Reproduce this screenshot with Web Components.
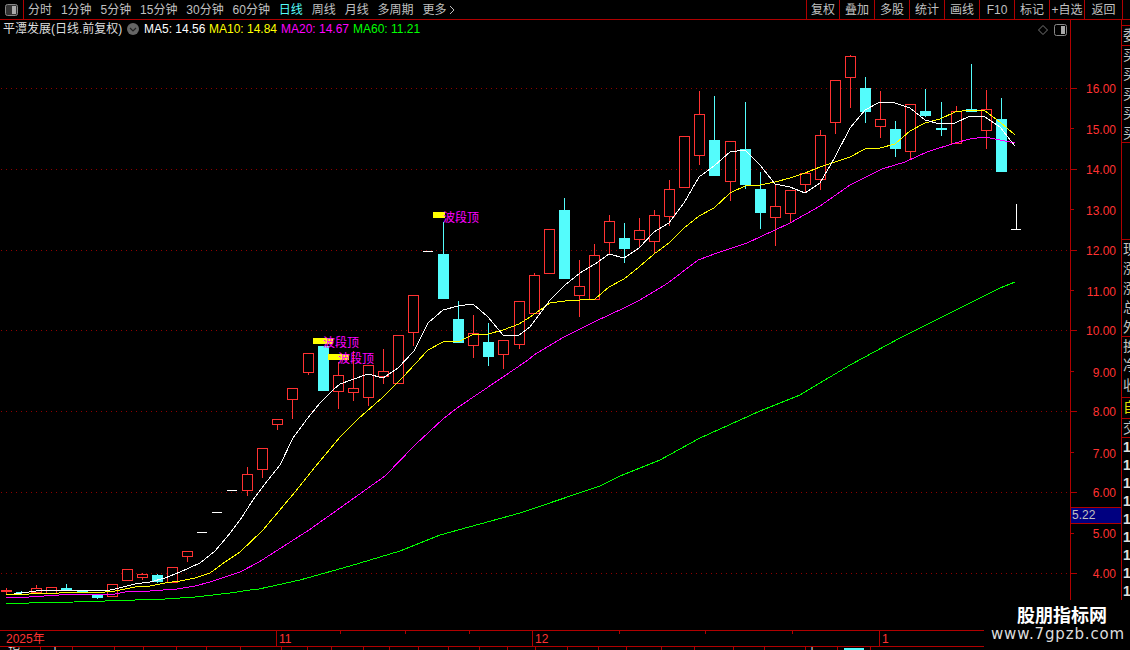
<!DOCTYPE html>
<html lang="zh"><head><meta charset="utf-8"><title>平潭发展</title>
<style>
html,body{margin:0;padding:0;background:#000;overflow:hidden}
body{font-family:"Liberation Sans","Noto Sans CJK SC",sans-serif;font-size:12px}
</style></head>
<body>
<stock-app></stock-app>
<script>
const FONT='"Liberation Sans","Noto Sans CJK SC",sans-serif';
const LINE='#b00000';
const panelIcon=(fillLeft)=>`<svg width="13" height="12" viewBox="0 0 13 12" style="display:block"><rect x="0.5" y="0.5" width="12" height="11" rx="2" fill="${fillLeft?'#333':'#000'}" stroke="#888"/><rect x="7" y="2" width="4" height="8" fill="#aaa"/></svg>`;

class ToolBar extends HTMLElement{
  constructor(){super();const s=this.attachShadow({mode:'open'});
    const left=[['分时'],['1分钟'],['5分钟'],['15分钟'],['30分钟'],['60分钟'],['日线',1],['周线'],['月线'],['多周期']];
    const right=[['复权',33],['叠加',35],['多股',35],['统计',35],['画线',35],['F10',35],['标记',35],['+自选',35],['返回',38]];
    s.innerHTML=`<style>
    :host{display:flex;height:19px;border-bottom:1px solid ${LINE};color:#c0c0c0;font:12px/20px ${FONT};white-space:nowrap}
    .ico{width:23px;border-right:1px solid ${LINE};display:flex;align-items:center;justify-content:center;box-sizing:content-box}
    .l{display:flex;gap:8.9px;padding-left:4px;flex:1}
    .on{color:#54fcfc}
    .more{display:flex;align-items:center;gap:3px}
    .r{display:flex;border-right:1px solid ${LINE};height:19px;margin-right:7px}
    .r span{border-left:1px solid ${LINE};text-align:center;box-sizing:border-box}
    </style>
    <div class="ico">${panelIcon(true)}</div>
    <div class="l">${left.map(([t,on])=>`<span class="${on?'on':''}">${t}</span>`).join('')}
      <span class="more">更多<svg width="6" height="10" viewBox="0 0 6 10"><path d="M1 1l4 4-4 4" fill="none" stroke="#c0c0c0"/></svg></span></div>
    <div class="r">${right.map(([t,w])=>`<span style="width:${w}px">${t}</span>`).join('')}</div>`;
  }
}
customElements.define('tool-bar',ToolBar);

class ChartLegend extends HTMLElement{
  constructor(){super();const s=this.attachShadow({mode:'open'});
    s.innerHTML=`<style>
    :host{position:absolute;left:3px;top:0;right:0;height:18px;display:flex;align-items:center;font:12px/18px ${FONT};white-space:nowrap;color:#ddd}
    .t{width:124px}
    .b{width:12px;height:12px;margin-right:5px;flex:none}
    .m{display:inline-block}
    .c{position:absolute;left:1035px;top:4px;display:flex;gap:6px;align-items:center}
    </style>
    <span class="t">平潭发展(日线.前复权)</span>
    <svg class="b" viewBox="0 0 12 12"><circle cx="6" cy="6" r="6" fill="#666"/><path d="M3 5l3 3 3-3" fill="none" stroke="#222" stroke-width="1.2"/></svg>
    <span class="m" style="color:#fff;width:65px">MA5: 14.56</span>
    <span class="m" style="color:#ff0;width:72px">MA10: 14.84</span>
    <span class="m" style="color:#f0f;width:72px">MA20: 14.67</span>
    <span class="m" style="color:#0f0">MA60: 11.21</span>
    <div class="c"><svg width="10" height="10" viewBox="0 0 10 10"><path d="M5 .5L9.5 5 5 9.5.5 5z" fill="none" stroke="#777"/></svg>${panelIcon(false)}</div>`;
  }
}
customElements.define('chart-legend',ChartLegend);

/* [left, bodyTop, bodyBottom, wickTop, wickBottom, kind]  r = red hollow, c = cyan filled */
const CANDLES=[
[1,590,592,588,594,'f'],[16,592,593,591,595,'c'],[31,588,592,585,593,'r'],[46,587,593,587,593,'r'],[61,588,591,584,591,'c'],
[77,590,592,590,592,'c'],[92,594,598,594,599,'c'],[107,584,596,584,596,'r'],[122,569,580,569,580,'r'],[137,574,577,573,580,'r'],
[152,575,582,574,583,'c'],[167,567,582,567,582,'r'],[182,551,556,551,562,'r'],
[257,448,469,448,478,'r'],[242,474,490,467,496,'r'],[272,419,424,419,430,'r'],[287,388,399,388,419,'r'],[303,353,372,353,375,'r'],
[318,346,391,346,391,'c'],[333,375,391,362,409,'r'],[348,388,392,351,401,'r'],[363,365,397,365,406,'r'],[378,371,376,349,384,'r'],
[393,335,383,335,383,'r'],[408,295,332,295,346,'r'],[438,254,299,222,299,'c'],[453,319,343,301,343,'c'],[468,333,345,315,358,'r'],
[483,342,357,323,366,'c'],[498,340,354,340,369,'r'],[514,301,344,301,349,'r'],[529,275,313,273,313,'r'],[544,229,273,229,273,'r'],
[559,210,279,198,279,'c'],[574,286,295,260,317,'r'],[589,255,299,244,299,'r'],[604,221,242,215,255,'r'],[619,238,249,223,263,'c'],
[634,230,239,218,248,'r'],[649,215,241,210,254,'r'],[664,189,216,180,226,'r'],[679,136,187,136,187,'r'],[694,114,155,91,165,'r'],
[709,140,176,96,176,'c'],[725,141,181,141,201,'r'],[740,149,185,102,189,'c'],[755,189,213,172,229,'c'],[770,206,217,185,246,'r'],
[785,190,213,190,223,'r'],[800,173,184,173,193,'r'],[815,135,179,130,190,'r'],[830,80,122,80,134,'r'],[845,56,77,55,108,'r'],
[860,88,112,77,123,'c'],[875,119,126,91,138,'r'],[890,129,149,121,157,'c'],[905,104,151,104,159,'r'],[920,111,116,89,117,'c'],
[936,128,130,102,136,'c'],[951,111,143,106,143,'r'],[966,109,112,64,112,'c'],[981,109,130,90,149,'r'],[996,119,172,98,172,'c']];
const DASHES=[[197,532],[212,512],[227,490],[423,251]];
const MA5=[[14,594],[29,592],[44,590],[90,590],[105,591],[115,589],[135,584],[150,582],[165,578],[180,572],[200,563],[215,551],[227,537],[240,520],[253,500],[268,480],[280,465],[293,438],[307,419],[320,403],[333,390],[340,384],[368,374],[383,378],[398,368],[414,351],[428,323],[443,310],[458,306],[473,304],[488,317],[503,335],[519,335],[530,327],[550,300],[565,285],[580,273],[595,264],[609,254],[624,258],[639,248],[654,232],[669,223],[684,203],[699,177],[714,166],[730,152],[745,150],[760,165],[775,184],[790,187],[805,193],[820,183],[835,157],[850,128],[865,110],[880,102],[895,103],[910,108],[925,120],[940,124],[955,123],[970,116],[985,117],[1000,127],[1015,146]];
const MA10=[[6,595],[29,594],[59,593],[74,592],[105,592],[115,591],[125,589],[135,587],[150,586],[165,583],[180,581],[195,578],[210,573],[225,562],[240,552],[263,530],[295,492],[315,467],[340,437],[358,419],[383,397],[403,377],[428,350],[443,342],[460,341],[472,335],[488,334],[503,330],[519,324],[530,317],[550,303],[565,301],[580,300],[595,299],[609,287],[624,279],[639,267],[654,254],[669,243],[684,228],[699,216],[714,208],[730,193],[745,186],[760,185],[775,182],[790,178],[805,173],[820,167],[835,162],[850,157],[865,149],[880,148],[895,144],[910,131],[925,123],[940,119],[955,112],[970,110],[985,111],[1000,122],[1015,135]];
const MA20=[[6,597],[29,597],[59,595],[74,594],[115,594],[125,592],[150,591],[177,589],[195,586],[210,582],[225,577],[240,572],[259,562],[309,530],[340,508],[385,476],[415,445],[443,419],[457,408],[503,377],[528,360],[534,355],[564,337],[594,322],[624,308],[640,300],[668,283],[698,260],[717,253],[747,243],[775,230],[790,223],[820,206],[850,185],[882,169],[905,162],[927,152],[955,143],[970,139],[985,137],[1000,140],[1015,143]];
const MA60=[[6,604],[29,603],[74,602],[105,601],[135,600],[165,599],[180,598],[195,597],[213,595],[230,593],[250,590],[259,589],[300,580],[350,566],[400,551],[440,535],[520,513],[600,486],[620,476],[660,460],[700,438],[760,411],[800,395],[850,365],[900,338],[950,313],[1000,288],[1015,282]];
const pts=a=>a.map(p=>p.join(',')).join(' ');

class KlineChart extends HTMLElement{
  constructor(){super();const s=this.attachShadow({mode:'open'});
    const RED='#ff3232',CY='#54fcfc';
    let c='';
    for(const [L,t,b,wt,wb,k] of CANDLES){
      const col=k==='c'?CY:RED, mid=L+5.5;
      if(wt<t)c+=`<line x1="${mid}" x2="${mid}" y1="${wt}" y2="${t}" stroke="${col}"/>`;
      if(wb>b)c+=`<line x1="${mid}" x2="${mid}" y1="${b}" y2="${wb}" stroke="${col}"/>`;
      if(k==='c')c+=`<rect x="${L}" y="${t}" width="11" height="${b-t}" fill="${col}"/>`;
      else if(k==='f')c+=`<rect x="${L}" y="${t}" width="11" height="${b-t}" fill="${RED}"/>`;
      else c+=`<rect x="${L+.5}" y="${t+.5}" width="10" height="${b-t}" fill="#000" stroke="${RED}"/>`;
    }
    for(const [L,y] of DASHES)c+=`<line x1="${L}" x2="${L+10}" y1="${y+.5}" y2="${y+.5}" stroke="#fff"/>`;
    c+=`<line x1="1016.5" x2="1016.5" y1="204" y2="229" stroke="#fff"/><line x1="1011" x2="1021" y1="229.5" y2="229.5" stroke="#fff"/>`;
    const grid=[88,169,250,330,411,492,573].map(y=>`<line x1="1" x2="1068" y1="${y+.5}" y2="${y+.5}" stroke="#900000" stroke-dasharray="1 4"/>`).join('');
    const marks=[[433,212,12,443,222],[313,338,20,323,347],[328,354,21,338,363]].map(([x,y,w,tx,ty])=>
      `<rect x="${x}" y="${y}" width="${w}" height="6" fill="#ff0"/><text x="${tx}" y="${ty}" fill="#f0f" font-size="12">波段顶</text>`).join('');
    s.innerHTML=`<style>
    :host{display:block;position:relative;flex:none;width:1070px;height:610px;overflow:hidden}
    svg{position:absolute;left:0;top:0;font-family:${FONT}}
    polyline{fill:none;stroke-width:1}
    line,rect,polyline{shape-rendering:crispEdges}
    </style>
    <svg width="1070" height="610" viewBox="0 20 1070 610">${grid}${c}
      <polyline points="${pts(MA60)}" stroke="#0f0"/><polyline points="${pts(MA20)}" stroke="#f0f"/>
      <polyline points="${pts(MA10)}" stroke="#ff0"/><polyline points="${pts(MA5)}" stroke="#fff"/>${marks}</svg>
    <slot></slot>`;
  }
}
customElements.define('kline-chart',KlineChart);

class PriceAxis extends HTMLElement{
  constructor(){super();const s=this.attachShadow({mode:'open'});
    const T=[['16.00',88,88],['15.00',128,129],['14.00',169,169],['13.00',209,210],['12.00',250,250],['11.00',290,291],['10.00',330,330],['9.00',371,372],['8.00',411,411],['7.00',452,453],['6.00',492,492],['5.00',533,533],['4.00',573,573]];
    s.innerHTML=`<style>
    :host{display:block;position:relative;flex:none;width:50px;height:610px;border-left:1px solid ${LINE};color:#ff3232;font:12px/14px ${FONT}}
    .l{position:absolute;right:5px;}
    .t{position:absolute;left:0;height:1px;background:${LINE}}
    .cur{position:absolute;left:0;right:0;top:487px;height:15px;line-height:15px;background:#000080;border-top:1px solid ${LINE};border-bottom:1px solid ${LINE};color:#c0c0c0;padding-left:1px}
    </style>
    ${T.map(([t,ty,y],i)=>`<i class="t" style="top:${ty-20}px;width:${i%2?3:6}px"></i><span class="l" style="top:${y-26}px">${t}</span>`).join('')}
    <div class="cur">5.22</div>`;
  }
}
customElements.define('price-axis',PriceAxis);

class SideStrip extends HTMLElement{
  constructor(){super();const s=this.attachShadow({mode:'open'});
    const cell=(h,list,col)=>`<div class="g" style="height:${h}px;color:${col||'#c0c0c0'}">${list.map(t=>`<span>${t}</span>`).join('')}</div>`;
    s.innerHTML=`<style>
    :host{display:block;flex:1;height:610px;border-left:1px solid ${LINE};overflow:hidden;font:14px/19.4px ${FONT}}
    .g{border-bottom:1px solid ${LINE};overflow:hidden;box-sizing:border-box;padding-left:1px}
    .g span{display:block;white-space:nowrap}
    .n{font:bold 14px/18px ${FONT};color:#e0e0e0;padding-left:1px}
    </style>
    <div class="g" style="height:6px;border-bottom:1px solid ${LINE}"></div>
    ${cell(20,['委'])}${cell(97,['买','买','买','买','买'])}${cell(97,[''])}
    ${cell(97,['现','涨','涨','总','外'])}${cell(61,['换','净','收'])}${cell(21,['自'],'#e0e000')}${cell(19,['交'])}
    <div class="n">1<br>1<br>1<br>1<br>1<br>1<br>1<br>1<br>1</div>`;
  }
}
customElements.define('side-strip',SideStrip);

class TimeAxis extends HTMLElement{
  constructor(){super();const s=this.attachShadow({mode:'open'});
    const cells=[[276,'2025年'],[256,'11'],[347,'12'],[251,'1']];
    const ticks=[340,405,469,619,705,792];
    s.innerHTML=`<style>
    :host{display:flex;position:relative;height:15px;border-top:1px solid ${LINE};border-bottom:1px solid ${LINE};color:#ff3232;font:12px/16px ${FONT}}
    span{box-sizing:border-box;padding-left:2px;border-left:1px solid ${LINE};flex:none}
    span:first-of-type{border-left:0;padding-left:6px}
    i{position:absolute;top:0;width:1px;height:3px;background:${LINE}}
    </style>
    ${cells.map(([w,t])=>`<span style="width:${w}px">${t}</span>`).join('')}
    ${ticks.map(x=>`<i style="left:${x}px"></i>`).join('')}`;
  }
}
customElements.define('time-axis',TimeAxis);

class TabStrip extends HTMLElement{
  constructor(){super();const s=this.attachShadow({mode:'open'});
    const X=[41,73,115,144,177,207,241,282,308,332,364,390,419,449,480,508,536,568,599,627,662,695,734,765,806,838,871];
    let prev=0,h='';
    const text={0:'<b style="padding-left:8px">指</b>',1:'<b style="padding-left:8px">十</b>',25:'<b>十</b>',26:'<em></em>'};
    X.forEach((x,i)=>{h+=`<span style="width:${x-prev}px">${text[i]||''}</span>`;prev=x;});
    s.innerHTML=`<style>
    :host{display:flex;height:3px;overflow:hidden;color:#ddd;font:12px/12px ${FONT}}
    span{box-sizing:border-box;border-right:1px solid ${LINE};flex:none;overflow:hidden;white-space:nowrap}
    b{font-weight:normal;display:block;margin-top:-1px}
    em{display:block;margin:1px 6px 0 6px;height:2px;background:#54fcfc}
    </style>${h}`;
  }
}
customElements.define('tab-strip',TabStrip);

class WaterMark extends HTMLElement{
  constructor(){super();const s=this.attachShadow({mode:'open'});
    s.innerHTML=`<style>
    :host{position:absolute;right:0;bottom:0;width:146px;height:50px;background:#000;display:flex;flex-direction:column;align-items:center;color:#fff;box-sizing:border-box;padding-top:2px}
    .a{font:bold 18px/24px "Noto Sans CJK SC",sans-serif;margin-left:10px;white-space:nowrap}
    .b{font:15px/20px "DejaVu Sans",sans-serif;color:#ddd;letter-spacing:.85px;white-space:nowrap;margin-top:-2px;margin-left:2px}
    </style><div class="a">股朋指标网</div><div class="b">www.7gpzb.com</div>`;
  }
}
customElements.define('water-mark',WaterMark);

class StockApp extends HTMLElement{
  constructor(){super();const s=this.attachShadow({mode:'open'});
    s.innerHTML=`<style>
    :host{display:block;position:relative;width:1130px;height:650px;background:#000;overflow:hidden}
    .main{display:flex;height:610px}
    </style>
    <tool-bar></tool-bar>
    <div class="main"><kline-chart><chart-legend></chart-legend></kline-chart><price-axis></price-axis><side-strip></side-strip></div>
    <time-axis></time-axis><tab-strip></tab-strip><water-mark></water-mark>`;
  }
}
customElements.define('stock-app',StockApp);
</script>
</body></html>
